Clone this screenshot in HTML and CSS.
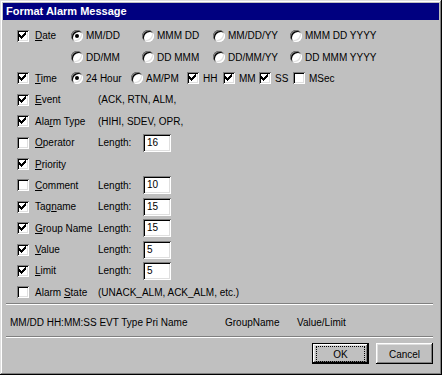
FILE: index.html
```html
<!DOCTYPE html>
<html lang="en">
<head>
  <meta charset="UTF-8" />
  <title>Format Alarm Message</title>
  <link rel="stylesheet" href="styles.css">
</head>
<body>
  <div class="dialog">
    <div class="titlebar">Format Alarm Message</div>

    <div class="fields">
      <!-- date -->
      <span class="check on"><svg viewBox="0 0 7 7"><path d="M0 2h1v3h-1zM1 3h1v3h-1zM2 4h1v3h-1zM3 3h1v3h-1zM4 2h1v3h-1zM5 1h1v3h-1zM6 0h1v3h-1z"/></svg></span>
      <span class="label"><u>D</u>ate</span>
      <span class="opt first"><span class="radio on"></span>MM/DD</span>
      <span class="opt"><span class="radio"></span>MMM DD</span>
      <span class="opt"><span class="radio"></span>MM/DD/YY</span>
      <span class="opt"><span class="radio"></span>MMM DD YYYY</span>
      <span class="opt first"><span class="radio"></span>DD/MM</span>
      <span class="opt"><span class="radio"></span>DD MMM</span>
      <span class="opt"><span class="radio"></span>DD/MM/YY</span>
      <span class="opt"><span class="radio"></span>DD MMM YYYY</span>

      <!-- time -->
      <span class="check on"><svg viewBox="0 0 7 7"><path d="M0 2h1v3h-1zM1 3h1v3h-1zM2 4h1v3h-1zM3 3h1v3h-1zM4 2h1v3h-1zM5 1h1v3h-1zM6 0h1v3h-1z"/></svg></span>
      <span class="label"><u>T</u>ime</span>
      <div class="timeopts">
        <span class="opt"><span class="radio on"></span>24 Hour</span>
        <span class="opt"><span class="radio"></span>AM/PM</span>
        <span class="opt cb"><span class="check on"><svg viewBox="0 0 7 7"><path d="M0 2h1v3h-1zM1 3h1v3h-1zM2 4h1v3h-1zM3 3h1v3h-1zM4 2h1v3h-1zM5 1h1v3h-1zM6 0h1v3h-1z"/></svg></span>HH</span>
        <span class="opt cb"><span class="check on"><svg viewBox="0 0 7 7"><path d="M0 2h1v3h-1zM1 3h1v3h-1zM2 4h1v3h-1zM3 3h1v3h-1zM4 2h1v3h-1zM5 1h1v3h-1zM6 0h1v3h-1z"/></svg></span>MM</span>
        <span class="opt cb"><span class="check on"><svg viewBox="0 0 7 7"><path d="M0 2h1v3h-1zM1 3h1v3h-1zM2 4h1v3h-1zM3 3h1v3h-1zM4 2h1v3h-1zM5 1h1v3h-1zM6 0h1v3h-1z"/></svg></span>SS</span>
        <span class="opt cb"><span class="check"></span>MSec</span>
      </div>

      <span class="check on"><svg viewBox="0 0 7 7"><path d="M0 2h1v3h-1zM1 3h1v3h-1zM2 4h1v3h-1zM3 3h1v3h-1zM4 2h1v3h-1zM5 1h1v3h-1zM6 0h1v3h-1z"/></svg></span>
      <span class="label"><u>E</u>vent</span>
      <span class="note">(ACK, RTN, ALM,</span>

      <span class="check on"><svg viewBox="0 0 7 7"><path d="M0 2h1v3h-1zM1 3h1v3h-1zM2 4h1v3h-1zM3 3h1v3h-1zM4 2h1v3h-1zM5 1h1v3h-1zM6 0h1v3h-1z"/></svg></span>
      <span class="label">Ala<u>r</u>m Type</span>
      <span class="note">(HIHI, SDEV, OPR,</span>

      <span class="check"></span>
      <span class="label"><u>O</u>perator</span>
      <span class="len">Length:</span>
      <span class="field">16</span>

      <span class="check on"><svg viewBox="0 0 7 7"><path d="M0 2h1v3h-1zM1 3h1v3h-1zM2 4h1v3h-1zM3 3h1v3h-1zM4 2h1v3h-1zM5 1h1v3h-1zM6 0h1v3h-1z"/></svg></span>
      <span class="label"><u>P</u>riority</span>

      <span class="check"></span>
      <span class="label"><u>C</u>omment</span>
      <span class="len">Length:</span>
      <span class="field">10</span>

      <span class="check on"><svg viewBox="0 0 7 7"><path d="M0 2h1v3h-1zM1 3h1v3h-1zM2 4h1v3h-1zM3 3h1v3h-1zM4 2h1v3h-1zM5 1h1v3h-1zM6 0h1v3h-1z"/></svg></span>
      <span class="label">Tag<u>n</u>ame</span>
      <span class="len">Length:</span>
      <span class="field">15</span>

      <span class="check on"><svg viewBox="0 0 7 7"><path d="M0 2h1v3h-1zM1 3h1v3h-1zM2 4h1v3h-1zM3 3h1v3h-1zM4 2h1v3h-1zM5 1h1v3h-1zM6 0h1v3h-1z"/></svg></span>
      <span class="label"><u>G</u>roup Name</span>
      <span class="len">Length:</span>
      <span class="field">15</span>

      <span class="check on"><svg viewBox="0 0 7 7"><path d="M0 2h1v3h-1zM1 3h1v3h-1zM2 4h1v3h-1zM3 3h1v3h-1zM4 2h1v3h-1zM5 1h1v3h-1zM6 0h1v3h-1z"/></svg></span>
      <span class="label"><u>V</u>alue</span>
      <span class="len">Length:</span>
      <span class="field">5</span>

      <span class="check on"><svg viewBox="0 0 7 7"><path d="M0 2h1v3h-1zM1 3h1v3h-1zM2 4h1v3h-1zM3 3h1v3h-1zM4 2h1v3h-1zM5 1h1v3h-1zM6 0h1v3h-1z"/></svg></span>
      <span class="label"><u>L</u>imit</span>
      <span class="len">Length:</span>
      <span class="field">5</span>

      <span class="check"></span>
      <span class="label">Alarm <u>S</u>tate</span>
      <span class="note">(UNACK_ALM, ACK_ALM, etc.)</span>
    </div>

    <div class="sep"></div>
    <div class="status">
      <span class="col-a">MM/DD HH:MM:SS EVT Type Pri Name</span>
      <span class="col-b">GroupName</span>
      <span>Value/Limit</span>
    </div>
    <div class="sep"></div>

    <div class="buttons">
      <button class="btn default"><span class="focus">OK</span></button>
      <button class="btn"><span class="focus none">Cancel</span></button>
    </div>
  </div>
</body>
</html>
```

FILE: styles.css
```css
body {
  margin: 0;
  background: #c0c0c0;
  font-family: "Liberation Sans", Arial, sans-serif;
  font-size: 10px;
  color: #000;
}

.dialog {
  width: 442px;
  height: 375px;
  box-sizing: border-box;
  padding: 3px;
  background: #c0c0c0;
  box-shadow: inset -1px -1px #000, inset 1px 1px #dfdfdf,
              inset -2px -2px #808080, inset 2px 2px #fff;
  display: flex;
  flex-direction: column;
}

.titlebar {
  height: 17px;
  line-height: 17px;
  background: #000080;
  color: #fff;
  font-size: 11px;
  font-weight: bold;
  padding-left: 3px;
}

/* option grid */
.fields {
  display: grid;
  grid-template-columns: 18px 36px 27px 44px 71px 77px 1fr;
  grid-auto-rows: 21.4px;
  align-items: center;
  padding: 5px 0 0 14px;
  white-space: nowrap;
}

.check {
  display: block;
  width: 12px;
  height: 12px;
  box-sizing: border-box;
  padding: 2px;
  background: #fff;
  box-shadow: inset 1px 1px #808080, inset -1px -1px #fff,
              inset 2px 2px #000, inset -2px -2px #dfdfdf;
}

.fields > .check {
  grid-column: 1;
}

.check svg {
  display: block;
  width: 7px;
  height: 7px;
  fill: #000;
  shape-rendering: crispEdges;
}

.radio {
  position: relative;
  flex: none;
  width: 12px;
  height: 12px;
  border-radius: 50%;
  background: #fff;
  box-shadow: inset 1px 1px #808080, inset -1px -1px #fff,
              inset 2px 2px #000, inset -2px -2px #dfdfdf;
}

.radio.on::after {
  content: "";
  position: absolute;
  left: 4px;
  top: 4px;
  width: 4px;
  height: 4px;
  border-radius: 50%;
  background: #000;
}

.label {
  grid-column: 2;
}

.opt {
  display: flex;
  align-items: center;
  gap: 3px;
}

.opt.first {
  grid-column: 3 / 5;
}

.opt.cb {
  gap: 4px;
}

.timeopts {
  grid-column: 3 / -1;
  display: grid;
  grid-template-columns: 60px 56px 36px 36px 34px auto;
  align-items: center;
}

.note {
  grid-column: 4 / -1;
}

.len {
  grid-column: 4;
}

.field {
  grid-column: 5;
  margin-left: 1px;
  width: 28px;
  height: 18px;
  line-height: 18px;
  box-sizing: border-box;
  padding-left: 4px;
  background: #fff;
  box-shadow: inset 1px 1px #808080, inset -1px -1px #fff,
              inset 2px 2px #000, inset -2px -2px #dfdfdf;
}

/* footer */
.sep {
  border-top: 1px solid #808080;
  border-bottom: 1px solid #fff;
  margin: 0 6px 0 3px;
}

.status {
  height: 31px;
  box-sizing: border-box;
  padding: 3px 0 0 7px;
  display: flex;
  align-items: center;
  white-space: nowrap;
}

.status .col-a {
  width: 215px;
}

.status .col-b {
  width: 72px;
}

.buttons {
  display: flex;
  justify-content: flex-end;
  gap: 7px;
  padding: 5px 6px 0 0;
}

.btn {
  display: flex;
  width: 57px;
  height: 21px;
  box-sizing: border-box;
  padding: 3px 4px 2px;
  border: 0;
  background: #c0c0c0;
  font: inherit;
  color: #000;
  box-shadow: inset -1px -1px #000, inset 1px 1px #fff,
              inset -2px -2px #808080, inset 2px 2px #dfdfdf;
}

.btn.default {
  border: 1px solid #000;
  padding: 2px 3px 1px;
}

.focus {
  flex: 1;
  display: flex;
  align-items: center;
  justify-content: center;
  border: 1px dotted #000;
}

.focus.none {
  border-color: transparent;
}
```
